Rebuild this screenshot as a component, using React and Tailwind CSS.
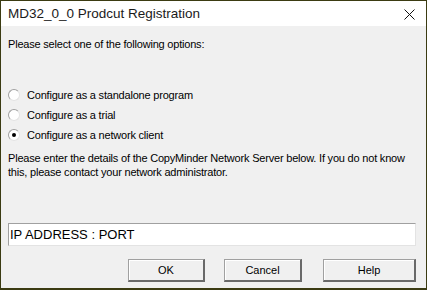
export default function App() {
  const options = [
    { label: 'Configure as a standalone program', checked: false },
    { label: 'Configure as a trial', checked: false },
    { label: 'Configure as a network client', checked: true },
  ]

  return (
    <div className="w-[427px] h-[290px] flex flex-col border border-b-2 border-[#3b3b12] bg-[#f0f0f0] text-black overflow-hidden" style={{ fontFamily: '"Liberation Sans", Arial, sans-serif' }}>
      {/* title bar */}
      <div className="h-[25px] shrink-0 bg-white flex items-center justify-between pl-[7px] pr-[11px]">
        <span className="text-[13.5px] leading-none text-[#1a1a1a]">MD32_0_0 Prodcut Registration</span>
        <svg width="11" height="11" viewBox="0 0 11 11" className="mt-[1px]">
          <path d="M0.5 0.5 L10.5 10.5 M10.5 0.5 L0.5 10.5" stroke="#111" strokeWidth="1" />
        </svg>
      </div>

      {/* body */}
      <div className="flex flex-col px-[7px] text-[11px] leading-[14px] tracking-[-0.2px]">
        <p className="mt-[11px]">Please select one of the following options:</p>

        <div className="mt-[37px] flex flex-col gap-[7px]">
          {options.map((o) => (
            <div key={o.label} className="flex items-center h-[13px]">
              <span className="w-[12px] h-[12px] rounded-full bg-white border border-[#a0a0a0] border-r-[#e3e3e3] border-b-[#e3e3e3] flex items-center justify-center">
                {o.checked && <span className="w-[4px] h-[4px] rounded-full bg-black" />}
              </span>
              <span className="ml-[7px]">{o.label}</span>
            </div>
          ))}
        </div>

        <p className="mt-[10px] pr-2">
          Please enter the details of the CopyMinder Network Server below. If you do not know this, please contact your network administrator.
        </p>

        <div className="mt-[44px] h-[23px] bg-white border border-[#a0a0a0] border-r-[#e3e3e3] border-b-[#e3e3e3] flex items-center pl-[1px] w-[408px]">
          <span className="text-[13px] leading-none tracking-normal">IP ADDRESS : PORT</span>
        </div>

        <div className="mt-[13px] flex pl-[120px] gap-[19px]">
          {[['OK', 'w-[77px]'], ['Cancel', 'w-[78px]'], ['Help', 'w-[93px] ml-[2px]']].map(([t, w]) => (
            <button key={t} className={`${w} h-[23px] bg-[#f0f0f0] border-t border-l border-[#a0a0a0] border-r-2 border-b-2 border-r-[#696969] border-b-[#696969] shadow-[inset_1px_1px_0_#fff] flex items-center justify-center text-[11px] tracking-normal`}>
              {t}
            </button>
          ))}
        </div>
      </div>
    </div>
  )
}
